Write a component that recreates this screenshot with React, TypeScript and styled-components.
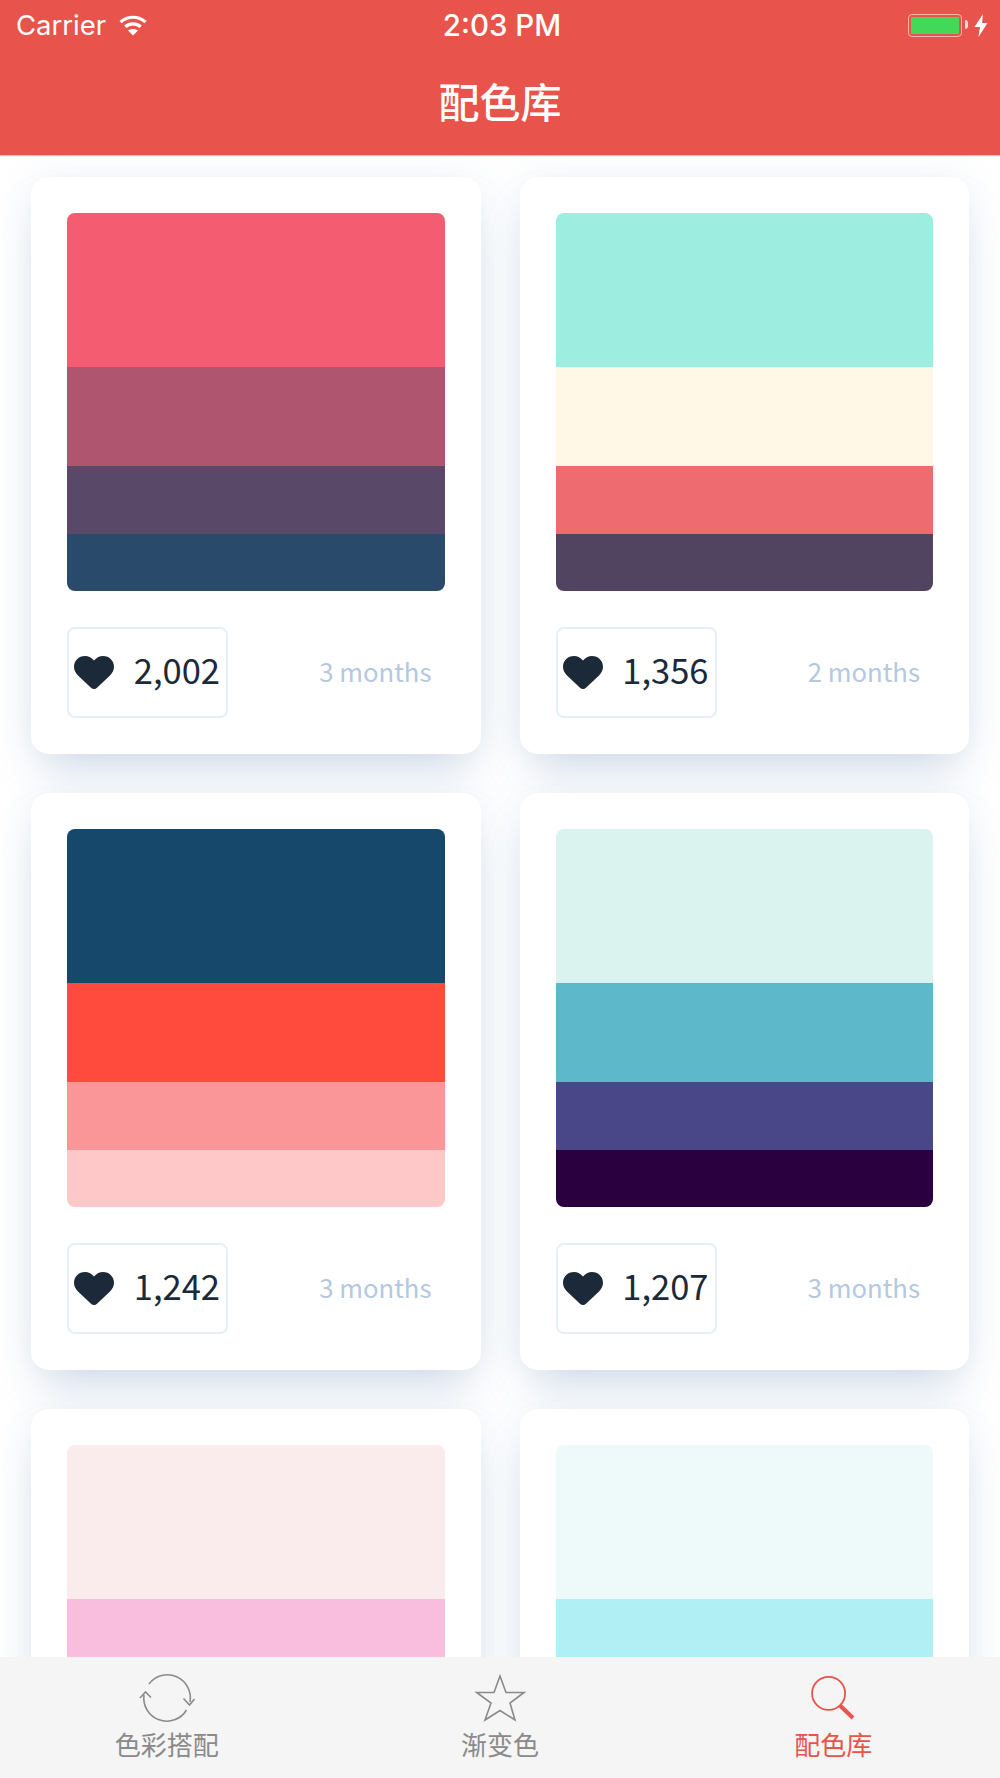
import styled, { createGlobalStyle } from "styled-components";

const red = "#e8534b";
const gray = "#8a8a8a";
const cjk = `"Noto Sans CJK SC", "Noto Sans", sans-serif`;

const GlobalStyle = createGlobalStyle`
  html, body {
    margin: 0;
    padding: 0;
    background: #fff;
  }
  * {
    box-sizing: border-box;
  }
`;

const Page = styled.div`
  width: 1000px;
  height: 1778px;
  display: flex;
  flex-direction: column;
  overflow: hidden;
  background: #fff;
  font-family: ${cjk};
`;

const Header = styled.header`
  position: relative;
  z-index: 2;
  height: 155px;
  flex: none;
  background: ${red};
  box-shadow: 0 1px 1px rgba(0, 0, 0, 0.22);
  color: #fff;
`;

const StatusBar = styled.div`
  height: 50px;
  padding: 0 12px 0 16px;
  display: grid;
  grid-template-columns: 1fr auto 1fr;
  align-items: center;
  font-family: Inter, "Liberation Sans", sans-serif;
  font-size: 27.5px;
`;

const StatusLeft = styled.div`
  display: flex;
  align-items: center;
  gap: 13px;
`;

const Time = styled.div`
  font-weight: 500;
  font-size: 29.5px;
`;

const StatusRight = styled.div`
  display: flex;
  align-items: center;
  justify-content: flex-end;
  gap: 12px;
`;

const Battery = styled.div`
  position: relative;
  width: 54px;
  height: 23px;
  padding: 2px;
  border: 1.5px solid #ffb5ae;
  border-radius: 4px;
  &::after {
    content: "";
    position: absolute;
    right: -7px;
    top: 5px;
    width: 3px;
    height: 9px;
    background: #ffd9d6;
    border-radius: 0 3px 3px 0;
  }
`;

const BatteryFill = styled.div`
  width: 100%;
  height: 100%;
  background: #44d858;
  border-radius: 1px;
`;

const Title = styled.h1`
  margin: 0;
  height: 100px;
  padding-top: 9px;
  text-align: center;
  font-size: 41px;
  line-height: 82px;
  font-weight: 500;
`;

const Content = styled.main`
  flex: 1;
  min-height: 0;
  overflow: hidden;
  padding: 22px 31px 0;
  display: grid;
  grid-template-columns: 1fr 1fr;
  grid-auto-rows: max-content;
  column-gap: 39px;
  row-gap: 39px;
`;

const Card = styled.article`
  padding: 36px;
  border-radius: 18px;
  background: #fff;
  box-shadow: 0 26px 46px -14px rgba(160, 180, 208, 0.46),
    0 0 36px rgba(186, 203, 224, 0.24);
`;

const Swatch = styled.div`
  height: 378px;
  display: flex;
  flex-direction: column;
  border-radius: 8px;
  overflow: hidden;
`;

const Band = styled.div<{ $color: string; $height: number }>`
  height: ${({ $height }) => $height}px;
  flex: none;
  background: ${({ $color }) => $color};
`;

const CardFooter = styled.div`
  margin-top: 36px;
  display: flex;
  align-items: center;
  justify-content: space-between;
  padding-right: 13px;
`;

const LikeBox = styled.div`
  width: 161px;
  height: 91px;
  padding: 0 6px 0 5px;
  display: flex;
  align-items: center;
  justify-content: space-between;
  border: 2px solid #e6eff8;
  border-radius: 8px;
`;

const Count = styled.span`
  padding-bottom: 6px;
  font-size: 34.5px;
  line-height: 1;
  color: #1c2938;
`;

const Age = styled.span`
  padding-bottom: 4px;
  font-size: 25.7px;
  color: #b4c8e0;
`;

const TabBar = styled.nav`
  height: 121px;
  flex: none;
  position: relative;
  z-index: 2;
  display: grid;
  grid-template-columns: repeat(3, 1fr);
  background: #f5f5f5;
`;

const Tab = styled.div<{ $active?: boolean }>`
  padding-top: 17px;
  display: flex;
  flex-direction: column;
  align-items: center;
  color: ${({ $active }) => ($active ? red : gray)};
`;

const TabIcon = styled.svg`
  display: block;
  width: 54px;
  height: 50px;
  overflow: visible;
`;

const TabLabel = styled.span`
  margin-top: 2px;
  font-size: 26px;
  line-height: 36px;
`;

const WifiIcon = () => (
  <svg width="28" height="21" viewBox="0 0 28 21" fill="none" stroke="#fff" strokeWidth="3.2">
    <path d="M1.5 7.2C8.5 0.6 19.5 0.6 26.5 7.2" />
    <path d="M6.3 11.8C10.8 7.9 17.2 7.9 21.7 11.8" />
    <path d="M14 20.5L9 15.6C11.8 13.6 16.2 13.6 19 15.6Z" fill="#fff" stroke="none" />
  </svg>
);

const BoltIcon = () => (
  <svg width="14" height="23" viewBox="0 0 14 23" fill="#fff">
    <path d="M9 0L0.5 13H6L4.5 23L13.5 9H8Z" />
  </svg>
);

const HeartIcon = () => (
  <svg width="40" height="33" viewBox="0 0 40 33" fill="#1c2938">
    <path d="M11 0C4.6 0 0 4.8 0 10.8C0 14.4 1.6 17 4 19.4L17 31.8C18.7 33.4 21.3 33.4 23 31.8L36 19.4C38.4 17 40 14.4 40 10.8C40 4.8 35.4 0 29 0C25.4 0 22.2 1.7 20 4.6C17.8 1.7 14.6 0 11 0Z" />
  </svg>
);

const SyncIcon = () => (
  <TabIcon viewBox="0 0 54 50" fill="none" stroke="currentColor" strokeWidth="1.6">
    <path d="M9 10A23 23 0 0 1 50 28" />
    <path d="M43.5 24.5L49.5 31L54.5 25" />
    <path d="M4 21A23 23 0 0 0 46.5 36" />
    <path d="M0 24L5.5 18L11 23.5" />
  </TabIcon>
);

const StarIcon = () => (
  <TabIcon viewBox="0 0 54 50" fill="none" stroke="currentColor" strokeWidth="1.6">
    <path d="M27 2L33 18.5H51L37 29L42 46L27 36.5L12 46L18 29L3.7 18.5H21Z" />
  </TabIcon>
);

const SearchIcon = () => (
  <TabIcon viewBox="0 0 54 50" fill="none" stroke="currentColor">
    <circle cx="22.6" cy="19.4" r="16.5" strokeWidth="1.8" />
    <path d="M33.5 31L47 44" strokeWidth="4" />
  </TabIcon>
);

// the last row runs under the tab bar, so only its top bands are ever seen
const palettes = [
  { colors: ["#f45c72", "#b0556f", "#594868", "#2a4a6b"], likes: "2,002", age: "3 months" },
  { colors: ["#9deee0", "#fff8e6", "#ee6b70", "#504460"], likes: "1,356", age: "2 months" },
  { colors: ["#16486b", "#ff4b3e", "#fb9698", "#fec8c9"], likes: "1,242", age: "3 months" },
  { colors: ["#daf3ef", "#5db9c9", "#4a4788", "#2b003e"], likes: "1,207", age: "3 months" },
  { colors: ["#faebec", "#f9bedd"] },
  { colors: ["#eefaf9", "#b0eff4"] },
];

const bandHeights = [154, 99, 68, 57];

export default function App() {
  return (
    <Page>
      <GlobalStyle />
      <Header>
        <StatusBar>
          <StatusLeft>
            <span>Carrier</span>
            <WifiIcon />
          </StatusLeft>
          <Time>2:03 PM</Time>
          <StatusRight>
            <Battery>
              <BatteryFill />
            </Battery>
            <BoltIcon />
          </StatusRight>
        </StatusBar>
        <Title>配色库</Title>
      </Header>
      <Content>
        {palettes.map((palette, i) => (
          <Card key={i}>
            <Swatch>
              {palette.colors.map((color, j) => (
                <Band key={j} $color={color} $height={bandHeights[j]} />
              ))}
            </Swatch>
            {palette.likes && (
              <CardFooter>
                <LikeBox>
                  <HeartIcon />
                  <Count>{palette.likes}</Count>
                </LikeBox>
                <Age>{palette.age}</Age>
              </CardFooter>
            )}
          </Card>
        ))}
      </Content>
      <TabBar>
        <Tab>
          <SyncIcon />
          <TabLabel>色彩搭配</TabLabel>
        </Tab>
        <Tab>
          <StarIcon />
          <TabLabel>渐变色</TabLabel>
        </Tab>
        <Tab $active>
          <SearchIcon />
          <TabLabel>配色库</TabLabel>
        </Tab>
      </TabBar>
    </Page>
  );
}
